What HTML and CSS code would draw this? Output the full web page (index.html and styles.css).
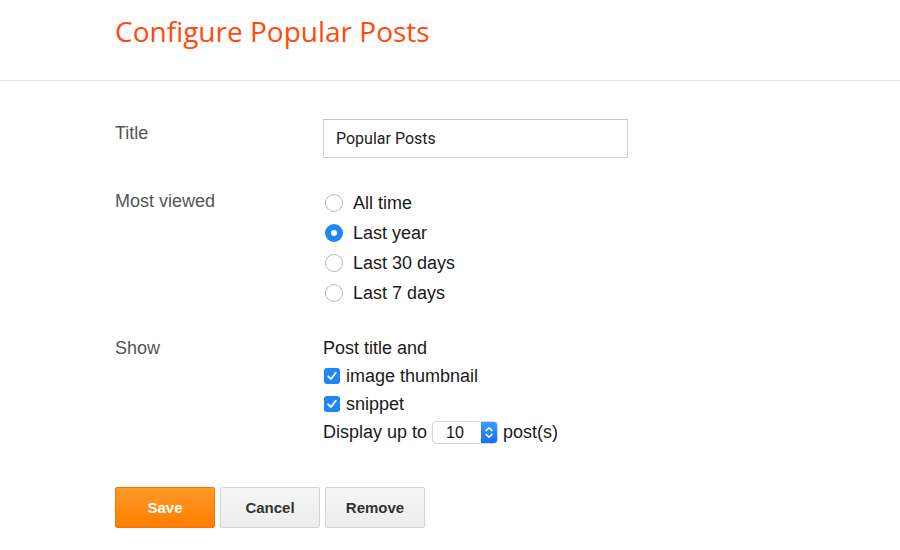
FILE: index.html
```html
<!DOCTYPE html>
<html>
<head>
<meta charset="utf-8">
<link rel="stylesheet" href="styles.css">
</head>
<body>
<header class="header">
  <h1 class="page-title">Configure Popular Posts</h1>
</header>
<main class="form">
  <div class="row row-title">
    <div class="label">Title</div>
    <div class="field">
      <div class="text-input">Popular Posts</div>
    </div>
  </div>
  <div class="row row-viewed">
    <div class="label">Most viewed</div>
    <div class="field options">
      <div class="option"><span class="radio"></span>All time</div>
      <div class="option"><span class="radio checked"></span>Last year</div>
      <div class="option"><span class="radio"></span>Last 30 days</div>
      <div class="option"><span class="radio"></span>Last 7 days</div>
    </div>
  </div>
  <div class="row row-show">
    <div class="label">Show</div>
    <div class="field show-list">
      <div class="show-line">Post title and</div>
      <div class="show-line"><span class="checkbox"><svg viewBox="0 0 16 16" width="16" height="16"><path d="M4.2 8.3 L7 11 L11.8 4.8" fill="none" stroke="#fff" stroke-width="1.8" stroke-linecap="round" stroke-linejoin="round"/></svg></span>image thumbnail</div>
      <div class="show-line"><span class="checkbox"><svg viewBox="0 0 16 16" width="16" height="16"><path d="M4.2 8.3 L7 11 L11.8 4.8" fill="none" stroke="#fff" stroke-width="1.8" stroke-linecap="round" stroke-linejoin="round"/></svg></span>snippet</div>
      <div class="show-line">Display up to
        <span class="select"><span class="select-value">10</span><span class="select-arrows"><svg viewBox="0 0 16 24" width="16" height="23"><path d="M5 10 L8 7 L11 10 M5 14 L8 17 L11 14" fill="none" stroke="#fff" stroke-width="1.6" stroke-linecap="round" stroke-linejoin="round"/></svg></span></span>
        post(s)</div>
    </div>
  </div>
  <div class="buttons">
    <button class="btn btn-primary">Save</button>
    <button class="btn">Cancel</button>
    <button class="btn">Remove</button>
  </div>
</main>
</body>
</html>
```
FILE: styles.css
```css
html, body {
  margin: 0;
  padding: 0;
  background: #fff;
}
body {
  font-family: "Liberation Sans", Arial, sans-serif;
  color: #222;
}
.header {
  height: 81px;
  border-bottom: 1px solid #e5e5e5;
  padding-left: 115px;
  box-sizing: border-box;
}
.page-title {
  margin: 0;
  padding-top: 12px;
  font-family: "Open Sans", sans-serif;
  font-weight: 400;
  font-size: 28px;
  line-height: 38px;
  color: #ff4b0a;
}
.form {
  padding-left: 115px;
  padding-top: 38px;
}
.row {
  display: flex;
}
.label {
  width: 208px;
  font-size: 18px;
  color: #555;
  line-height: 28px;
}
.text-input {
  width: 305px;
  height: 39px;
  box-sizing: border-box;
  border: 1px solid #d0d0d0;
  border-top-color: #c4c4c4;
  font-family: Roboto, sans-serif;
  font-size: 16px;
  color: #222;
  line-height: 38px;
  padding-left: 12px;
}
.row-viewed {
  margin-top: 30px;
}
.row-viewed .label {
  line-height: 26px;
}
.options {
  display: flex;
  flex-direction: column;
}
.option {
  height: 30px;
  display: flex;
  align-items: center;
  font-size: 18px;
  color: #1a1a1a;
}
.radio {
  width: 18px;
  height: 18px;
  box-sizing: border-box;
  border-radius: 50%;
  border: 1px solid #b8b8b8;
  background: #fff;
  margin-left: 2px;
  margin-right: 10px;
  position: relative;
}
.radio.checked {
  border: none;
  background: #1f86f8;
}
.radio.checked::after {
  content: "";
  position: absolute;
  left: 6px;
  top: 6px;
  width: 6px;
  height: 6px;
  border-radius: 50%;
  background: #fff;
}
.row-show {
  margin-top: 26px;
}
.show-list {
  display: flex;
  flex-direction: column;
}
.show-line {
  height: 28px;
  display: flex;
  align-items: center;
  font-size: 18px;
  color: #1a1a1a;
}
.checkbox {
  width: 16px;
  height: 16px;
  border-radius: 3px;
  background: #1f86f8;
  margin-left: 1px;
  margin-right: 6px;
  display: flex;
}
.select {
  display: inline-flex;
  margin: 0 5px 0 5px;
  height: 23px;
  border: 1px solid #d6d6d6;
  border-radius: 4px;
  overflow: hidden;
  box-sizing: border-box;
  background: #fff;
}
.select-value {
  width: 48px;
  font-size: 16px;
  line-height: 21px;
  padding-left: 13px;
  box-sizing: border-box;
  color: #111;
}
.select-arrows {
  width: 16px;
  background: linear-gradient(#3d9bff, #1170f5);
  display: flex;
  align-items: center;
  justify-content: center;
}
.select-arrows svg {
  display: block;
}
.buttons {
  display: flex;
  gap: 5px;
  margin-top: 41px;
}
.btn {
  width: 100px;
  height: 41px;
  font-family: "Liberation Sans", Arial, sans-serif;
  font-weight: 700;
  font-size: 15px;
  color: #333;
  background: linear-gradient(#f6f6f6, #ececec);
  border: 1px solid #d4d4d4;
  border-radius: 2px;
  padding: 0;
}
.btn-primary {
  color: #fff;
  background: linear-gradient(#ff9a2a, #ff7c00);
  border-color: #f07700;
}
```
